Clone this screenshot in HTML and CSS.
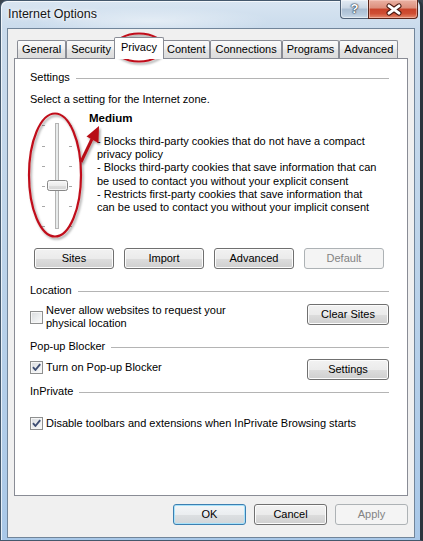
FILE: index.html
```html
<!DOCTYPE html>
<html lang="en">
<head>
<meta charset="utf-8">
<title>Internet Options</title>
<link rel="stylesheet" href="styles.css">
</head>
<body>
<div class="window">
  <div class="titlebar">
    <span class="title">Internet Options</span>
    <div class="caption-btns">
      <div class="cap-btn help">?</div>
      <div class="cap-btn close">
        <svg width="50" height="19" viewBox="0 0 50 19">
          <g transform="translate(25 9.5)" stroke-linecap="round">
            <path d="M-5 -3.6 L5 3.6 M-5 3.6 L5 -3.6" stroke="#4a1a12" stroke-width="5"/>
            <path d="M-5 -3.6 L5 3.6 M-5 3.6 L5 -3.6" stroke="#fff" stroke-width="3"/>
          </g>
        </svg>
      </div>
    </div>
  </div>
  <div class="client">
    <div class="tabs">
      <div class="tab">General</div>
      <div class="tab">Security</div>
      <div class="tab active">Privacy</div>
      <div class="tab">Content</div>
      <div class="tab">Connections</div>
      <div class="tab">Programs</div>
      <div class="tab">Advanced</div>
    </div>
    <div class="panel">
      <div class="group-head"><span>Settings</span><i class="rule"></i></div>
      <div class="zone-text">Select a setting for the Internet zone.</div>
      <div class="privacy-row">
        <svg class="slider" width="59" height="125" viewBox="0 0 59 125">
          <defs>
            <linearGradient id="thumb" x1="0" y1="0" x2="0" y2="1">
              <stop offset="0" stop-color="#f8f8f8"/>
              <stop offset="0.5" stop-color="#ececec"/>
              <stop offset="0.55" stop-color="#dedede"/>
              <stop offset="1" stop-color="#d2d2d2"/>
            </linearGradient>
          </defs>
          <rect x="25.5" y="11.5" width="3" height="105" fill="#e7eaea" stroke="#b4b4b4" stroke-width="1"/>
          <g stroke="#a8a8a8" stroke-width="1">
            <path d="M12 13.5h3M39 13.5h3"/>
            <path d="M12 34.5h3M39 34.5h3"/>
            <path d="M12 54.5h3M39 54.5h3"/>
            <path d="M12 74.5h3M39 74.5h3"/>
            <path d="M12 94.5h3M39 94.5h3"/>
            <path d="M12 114.5h3M39 114.5h3"/>
          </g>
          <rect x="17.5" y="68.5" width="20" height="10" rx="2" fill="url(#thumb)" stroke="#878787"/>
          <rect x="18.5" y="69.5" width="18" height="8" rx="1.5" fill="none" stroke="#fafafa" stroke-width="0.8"/>
        </svg>
        <div class="level">
          <div class="level-name">Medium</div>
          <div class="level-desc">- Blocks third-party cookies that do not have a compact<br>privacy policy<br>- Blocks third-party cookies that save information that can<br>be used to contact you without your explicit consent<br>- Restricts first-party cookies that save information that<br>can be used to contact you without your implicit consent</div>
        </div>
      </div>
      <div class="btn-row">
        <button class="btn">Sites</button>
        <button class="btn">Import</button>
        <button class="btn">Advanced</button>
        <button class="btn disabled">Default</button>
      </div>

      <div class="group-head loc-head"><span>Location</span><i class="rule"></i></div>
      <div class="opt-row loc-row">
        <label class="check-label">
          <span class="check"></span>
          <span>Never allow websites to request your<br>physical location</span>
        </label>
        <button class="btn side-btn">Clear Sites</button>
      </div>

      <div class="group-head pop-head"><span>Pop-up Blocker</span><i class="rule"></i></div>
      <div class="opt-row pop-row">
        <label class="check-label lifted">
          <span class="check checked"><svg width="11" height="11" viewBox="0 0 11 11"><path d="M2 5.2 L4.4 8 L9.2 2.2" fill="none" stroke="#3d4d72" stroke-width="1.9" stroke-linejoin="round"/></svg></span>
          <span>Turn on Pop-up Blocker</span>
        </label>
        <button class="btn side-btn">Settings</button>
      </div>

      <div class="group-head priv-head"><span>InPrivate</span><i class="rule"></i></div>
      <label class="check-label inpriv-row">
        <span class="check checked"><svg width="11" height="11" viewBox="0 0 11 11"><path d="M2 5.2 L4.4 8 L9.2 2.2" fill="none" stroke="#3d4d72" stroke-width="1.9" stroke-linejoin="round"/></svg></span>
        <span>Disable toolbars and extensions when InPrivate Browsing starts</span>
      </label>
    </div>
    <div class="dialog-btns">
      <button class="btn default">OK</button>
      <button class="btn">Cancel</button>
      <button class="btn disabled">Apply</button>
    </div>
  </div>

  <svg class="annotations" width="423" height="541" viewBox="0 0 423 541">
    <defs>
      <filter id="sh" x="-20%" y="-20%" width="140%" height="140%">
        <feDropShadow dx="1.5" dy="2" stdDeviation="1.2" flood-color="#000" flood-opacity="0.35"/>
      </filter>
    </defs>
    <g fill="none" stroke="#c0101a" stroke-width="2.2" filter="url(#sh)">
      <ellipse cx="139" cy="47.5" rx="24.5" ry="14"/>
      <ellipse cx="55" cy="175" rx="26" ry="61.5"/>
    </g>
    <g filter="url(#sh)">
      <line x1="81" y1="162" x2="92" y2="139" stroke="#b80f19" stroke-width="3"/>
      <polygon points="99,126 86.5,136.5 98.5,143" fill="#b80f19"/>
    </g>
  </svg>
</div>
</body>
</html>
```

FILE: styles.css
```css
* { box-sizing: border-box; }
html, body { margin: 0; padding: 0; }
body {
  width: 423px;
  height: 541px;
  overflow: hidden;
  font-family: "Liberation Sans", Arial, sans-serif;
  font-size: 11px;
  color: #000;
  background: #3a444e;
}

.window {
  position: relative;
  width: 423px;
  height: 541px;
  border: 1px solid #44586c;
  border-right: 3px solid #2c343c;
  border-radius: 7px 7px 0 0;
  background:
    radial-gradient(ellipse 120px 14px at 150px 20px, rgba(255,255,255,0.45), rgba(255,255,255,0)),
    linear-gradient(180deg, #d8e5f1 0%, #cadbec 5%, #bfd5ea 40%, #a9c8e8 100%);
  box-shadow: inset 1px 1px 0 rgba(255,255,255,0.7);
  padding: 0 5px 2px 6px;
  display: flex;
  flex-direction: column;
}

.titlebar {
  height: 27px;
  flex: none;
  display: flex;
  align-items: flex-start;
  justify-content: space-between;
}
.title {
  padding: 6px 0 0 1px;
  font-size: 12.5px;
  line-height: 15px;
  color: #151515;
  text-shadow: 0 0 6px #fff, 0 0 3px #fff;
}
.caption-btns {
  display: flex;
  margin: -1px -3px 0 0;
}
.cap-btn {
  height: 19px;
  border: 1px solid #4f6177;
  border-top: none;
}
.cap-btn.help {
  width: 28px;
  border-right: none;
  border-radius: 0 0 0 4px;
  background: linear-gradient(180deg, #e3ebf4 0%, #c9d6e4 45%, #a9bdd2 50%, #b7cadd 80%, #cddcea 100%);
  box-shadow: inset 0 0 0 1px rgba(255,255,255,0.45);
  color: #fff;
  font-weight: bold;
  font-size: 13px;
  line-height: 18px;
  text-align: center;
  text-shadow: 0 0 1px #233142, 0 0 1px #233142, 0 0 2px #233142;
}
.cap-btn.close {
  width: 50px;
  border-color: #5a2419;
  border-radius: 0 0 4px 0;
  background: linear-gradient(180deg, #eab1a3 0%, #dc8e7b 45%, #c8432a 50%, #cf4e33 75%, #e48a6e 100%);
  box-shadow: inset 0 0 0 1px rgba(255,220,210,0.45);
}
.cap-btn.close svg { display: block; }

.client {
  flex: 1;
  background: #f0f0f0;
  border: 1px solid #71859a;
  padding: 8px 6px 12px 6px;
  display: flex;
  flex-direction: column;
}

.tabs {
  display: flex;
  align-items: flex-end;
  height: 21px;
  flex: none;
  margin-left: 3px;
  position: relative;
  z-index: 2;
}
.tab {
  height: 18px;
  padding: 0 4px;
  border: 1px solid #898c95;
  border-bottom: none;
  border-radius: 2px 2px 0 0;
  background: linear-gradient(180deg, #fbfbfb 0%, #f0f0f0 45%, #e4e4e4 55%, #dcdcdc 100%);
  line-height: 17px;
  white-space: nowrap;
}
.tab.active {
  height: 22px;
  margin: 0 -2px -1px;
  padding: 0 6px;
  background: #fff;
  line-height: 19px;
  position: relative;
  z-index: 3;
}

.panel {
  height: 438px;
  flex: none;
  background: #fff;
  border: 1px solid #898c95;
  padding: 12px 18px 0 15px;
}

.group-head {
  display: flex;
  align-items: center;
  line-height: 13px;
  white-space: nowrap;
}
.group-head .rule {
  flex: 1;
  height: 1px;
  background: #b4b4b4;
  margin-left: 6px;
  margin-top: 1px;
}

.zone-text {
  margin-top: 9px;
  line-height: 13px;
}

.privacy-row {
  display: flex;
  height: 125px;
  margin-top: 6px;
}
.slider {
  flex: none;
  display: block;
}
.level-name {
  font-weight: bold;
  font-size: 11.5px;
  line-height: 13px;
}
.level-desc {
  margin: 10px 0 0 8px;
  line-height: 13.2px;
  white-space: nowrap;
}

.btn {
  height: 21px;
  font: inherit;
  color: #000;
  border: 1px solid #707070;
  border-radius: 3px;
  background: linear-gradient(180deg, #f2f2f2 0%, #ebebeb 50%, #dddddd 51%, #cfcfcf 100%);
  box-shadow: inset 0 0 0 1px #fcfcfc;
  padding: 0;
  line-height: 19px;
  text-align: center;
  white-space: nowrap;
}
.btn.disabled {
  border-color: #adb2b5;
  background: #f4f4f4;
  box-shadow: none;
  color: #838383;
}
.btn.default {
  border-color: #3c7fb1;
  box-shadow: inset 0 0 0 1px #a8e2fa;
  background: linear-gradient(180deg, #f3f6f8 0%, #ebeef0 50%, #dde0e2 51%, #d2d6d9 100%);
}

.btn-row {
  display: flex;
  gap: 10px;
  margin: 11px 0 0 4px;
}
.btn-row .btn { width: 80px; }

.loc-head { margin-top: 15px; }
.opt-row {
  display: flex;
  justify-content: space-between;
  align-items: flex-start;
}
.loc-row { margin-top: 7px; }
.pop-head { margin-top: 10px; }
.pop-row { margin-top: 6px; }
.priv-head { margin-top: 5px; }
.inpriv-row { margin-top: 19px; }

.side-btn { width: 82px; }

.check-label {
  display: flex;
  align-items: center;
  gap: 3px;
  line-height: 13px;
  white-space: nowrap;
}
.check-label.lifted { margin-top: 2px; }
.check {
  flex: none;
  width: 13px;
  height: 13px;
  border: 1px solid #8e8f8f;
  background: linear-gradient(135deg, #d9dbdd 0%, #eceeef 55%, #fbfbfb 100%);
  box-shadow: inset 0 0 0 1px #f6f6f6;
}
.check svg { display: block; }

.dialog-btns {
  margin-top: 8px;
  display: flex;
  justify-content: flex-end;
  gap: 8px;
}
.dialog-btns .btn { width: 73px; }

.annotations {
  position: absolute;
  top: -1px;
  left: -1px;
  pointer-events: none;
}
```
